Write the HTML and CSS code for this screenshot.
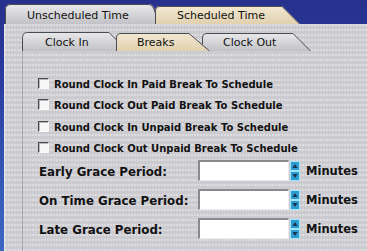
FILE: index.html
```html
<!DOCTYPE html>
<html>
<head>
<meta charset="utf-8">
<link rel="stylesheet" href="styles.css">
</head>
<body>
<div class="screen">
  <div class="toptabs">
    <div class="tab top-unsched">
      <svg class="tab-shape" width="160" height="20" viewBox="0 0 160 20">
        <defs><linearGradient id="g1" x1="0" y1="0" x2="0" y2="1"><stop offset="0" stop-color="#eaeaec"/><stop offset="1" stop-color="#c2c2c6"/></linearGradient></defs>
        <path d="M0,20 V6 Q0,0 6,0 H144 Q147,0 149,4 L155,20 Z" fill="url(#g1)"/>
        <path d="M0.5,20 V6 Q0.5,0.5 6,0.5 H144 Q146.5,0.5 148.5,4 L154.5,20" fill="none" stroke="#4a4a52"/>
      </svg>
      <span class="tab-text">Unscheduled Time</span>
    </div>
    <div class="tab top-sched active">
      <svg class="tab-shape" width="146" height="18" viewBox="0 0 146 18">
        <defs><linearGradient id="g2" x1="0" y1="0" x2="0" y2="1"><stop offset="0" stop-color="#f3e9d3"/><stop offset="1" stop-color="#e0d0ae"/></linearGradient></defs>
        <path d="M0,18 V5 Q0,0 5,0 H127 L145,18 Z" fill="url(#g2)"/>
        <path d="M0.5,18 V5 Q0.5,0.5 5,0.5 H127 L144.5,18" fill="none" stroke="#4a4a52"/>
      </svg>
      <span class="tab-text">Scheduled Time</span>
    </div>
  </div>
  <div class="panel">
    <div class="subtabs">
      <div class="tab sub-clockin">
        <svg class="tab-shape" width="110" height="19" viewBox="0 0 110 19">
          <defs><linearGradient id="g3" x1="0" y1="0" x2="0" y2="1"><stop offset="0" stop-color="#eaeaec"/><stop offset="1" stop-color="#c2c2c6"/></linearGradient></defs>
          <path d="M0,19 V5.5 Q0,0 5.5,0 H87 L106,19 Z" fill="url(#g3)"/>
          <path d="M0.5,19 V5.5 Q0.5,0.5 5.5,0.5 H87 L105.5,19" fill="none" stroke="#4a4a52"/>
        </svg>
        <span class="tab-text">Clock In</span>
      </div>
      <div class="tab sub-breaks active">
        <svg class="tab-shape" width="95" height="18" viewBox="0 0 95 18">
          <defs><linearGradient id="g4" x1="0" y1="0" x2="0" y2="1"><stop offset="0" stop-color="#f3e9d3"/><stop offset="1" stop-color="#e0d0ae"/></linearGradient></defs>
          <path d="M0,18 V5 Q0,0 5,0 H73 L94,18 Z" fill="url(#g4)"/>
          <path d="M0.5,18 V5 Q0.5,0.5 5,0.5 H73 L93.5,18" fill="none" stroke="#4a4a52"/>
        </svg>
        <span class="tab-text">Breaks</span>
      </div>
      <div class="tab sub-clockout">
        <svg class="tab-shape" width="110" height="18" viewBox="0 0 110 18">
          <defs><linearGradient id="g5" x1="0" y1="0" x2="0" y2="1"><stop offset="0" stop-color="#eaeaec"/><stop offset="1" stop-color="#c2c2c6"/></linearGradient></defs>
          <path d="M0,18 V5 Q0,0 5,0 H91 L109,18 Z" fill="url(#g5)"/>
          <path d="M0.5,18 V5 Q0.5,0.5 5,0.5 H91 L108.5,18" fill="none" stroke="#4a4a52"/>
        </svg>
        <span class="tab-text">Clock Out</span>
      </div>
    </div>
    <div class="content">
      <div class="checks">
        <label class="check"><input type="checkbox" class="cb"><span class="check-text">Round Clock In Paid Break To Schedule</span></label>
        <label class="check"><input type="checkbox" class="cb"><span class="check-text">Round Clock Out Paid Break To Schedule</span></label>
        <label class="check"><input type="checkbox" class="cb"><span class="check-text">Round Clock In Unpaid Break To Schedule</span></label>
        <label class="check"><input type="checkbox" class="cb"><span class="check-text">Round Clock Out Unpaid Break To Schedule</span></label>
      </div>
      <div class="grace">
        <div class="glabel">Early Grace Period:</div>
        <input type="text" class="num">
        <svg class="spin" width="10" height="21" viewBox="0 0 10 21">
          <rect x="0.5" y="1.5" width="9" height="9" fill="#2f9ccf" stroke="#9ee6fb"/>
          <path d="M2.5,8 L5,4 L7.5,8 Z" fill="#14344f"/>
          <rect x="0.5" y="11.5" width="9" height="9" fill="#2f9ccf" stroke="#9ee6fb"/>
          <path d="M2.5,14 L5,18 L7.5,14 Z" fill="#14344f"/>
        </svg>
        <div class="unit">Minutes</div>

        <div class="glabel">On Time Grace Period:</div>
        <input type="text" class="num">
        <svg class="spin" width="10" height="21" viewBox="0 0 10 21">
          <rect x="0.5" y="1.5" width="9" height="9" fill="#2f9ccf" stroke="#9ee6fb"/>
          <path d="M2.5,8 L5,4 L7.5,8 Z" fill="#14344f"/>
          <rect x="0.5" y="11.5" width="9" height="9" fill="#2f9ccf" stroke="#9ee6fb"/>
          <path d="M2.5,14 L5,18 L7.5,14 Z" fill="#14344f"/>
        </svg>
        <div class="unit">Minutes</div>

        <div class="glabel">Late Grace Period:</div>
        <input type="text" class="num">
        <svg class="spin" width="10" height="21" viewBox="0 0 10 21">
          <rect x="0.5" y="1.5" width="9" height="9" fill="#2f9ccf" stroke="#9ee6fb"/>
          <path d="M2.5,8 L5,4 L7.5,8 Z" fill="#14344f"/>
          <rect x="0.5" y="11.5" width="9" height="9" fill="#2f9ccf" stroke="#9ee6fb"/>
          <path d="M2.5,14 L5,18 L7.5,14 Z" fill="#14344f"/>
        </svg>
        <div class="unit">Minutes</div>
      </div>
    </div>
  </div>
</div>
</body>
</html>
```
FILE: styles.css
```css
html, body {
  margin: 0;
  padding: 0;
}
body {
  width: 367px;
  height: 251px;
  overflow: hidden;
  background: linear-gradient(180deg, #27318d 0px, #29379a 60px, #3150ae 150px, #3d68c2 251px);
  font-family: "DejaVu Sans", Verdana, sans-serif;
  color: #121212;
}
.screen {
  display: flex;
  flex-direction: column;
  height: 251px;
  padding-left: 4px;
  box-sizing: border-box;
}
.toptabs {
  height: 24px;
  display: flex;
  align-items: flex-end;
}
.tab {
  position: relative;
  box-sizing: border-box;
  font-size: 11px;
  line-height: 13px;
  white-space: nowrap;
  z-index: 1;
}
.tab.active {
  z-index: 3;
}
.tab-shape {
  position: absolute;
  left: 0;
  top: 0;
  overflow: visible;
}
.tab-text {
  position: relative;
  display: block;
}
.top-unsched {
  width: 152px;
  height: 20px;
  margin-left: 1px;
  padding: 5px 0 0 22px;
}
.top-sched {
  width: 145px;
  height: 18px;
  margin-left: -2px;
  padding: 3px 0 0 22px;
}
.panel {
  flex: 1;
  display: flex;
  flex-direction: column;
  border-left: 1px solid #e6e6ea;
  background-color: #cccbd0;
  background-image:
    radial-gradient(circle at 1px 1px, rgba(236, 236, 240, 0.75) 0.6px, transparent 1px);
  background-size: 3px 5px;
}
.subtabs {
  display: flex;
  align-items: flex-end;
  height: 27px;
  margin-left: 17px;
}
.sub-clockin {
  width: 100px;
  height: 19px;
  padding: 4px 0 0 23px;
}
.sub-breaks {
  width: 94px;
  height: 18px;
  margin-left: -6px;
  padding: 3px 0 0 21px;
}
.sub-clockout {
  width: 110px;
  height: 18px;
  margin-left: -8px;
  padding: 3px 0 0 21px;
}
.content {
  flex: 1;
  margin-left: 17px;
  border-left: 1px solid #a6a6ae;
  padding: 27px 0 0 15px;
}
.checks {
  display: grid;
  grid-auto-rows: 11px;
  row-gap: 10.4px;
}
.check {
  display: flex;
  align-items: flex-start;
}
.cb {
  appearance: none;
  -webkit-appearance: none;
  width: 11px;
  height: 11px;
  margin: 0;
  box-sizing: border-box;
  border: 1px solid;
  border-color: #4a4a4a #fafafa #fafafa #4a4a4a;
  background: #f6f6f6;
  box-shadow: inset 1px 1px 0 #b8b8bc;
}
.check-text {
  margin-left: 5px;
  padding-top: 1px;
  font-size: 10px;
  line-height: 11px;
  font-weight: bold;
  white-space: nowrap;
}
.grace {
  display: grid;
  grid-template-columns: 160px 92px 10px auto;
  grid-auto-rows: 21px;
  row-gap: 8px;
  margin-top: 7px;
  align-items: center;
}
.glabel {
  margin-left: 1px;
  padding-top: 3px;
  font-size: 11.8px;
  font-weight: bold;
  white-space: nowrap;
}
.num {
  width: 91px;
  height: 21px;
  margin: 0;
  box-sizing: border-box;
  border-style: solid;
  border-width: 2px 1px 1px 2px;
  border-color: #8a8a8e #ececee #ececee #8a8a8e;
  background: #ffffff;
  padding: 0;
}
.spin {
  display: block;
}
.unit {
  padding-left: 6px;
  font-size: 11.5px;
  font-weight: bold;
  white-space: nowrap;
}
```
